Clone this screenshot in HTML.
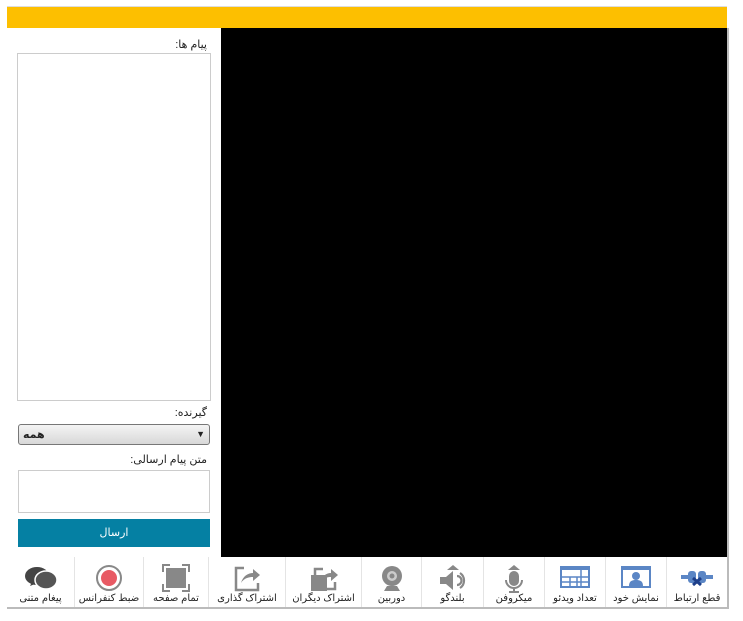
<!DOCTYPE html>
<html><head><meta charset="utf-8"><style>
*{box-sizing:border-box;margin:0;padding:0}
body{width:743px;height:621px;background:#fff;position:relative;font-family:"Liberation Sans","DejaVu Sans",sans-serif;font-size:11px;color:#222;overflow:hidden}
.abs{position:absolute}
.lbl{direction:rtl;text-align:right}
.tb{position:absolute;top:557px;height:50px;border-right:1px solid #e4e4e4;text-align:center;font-size:10px;color:#222}
.tb svg{position:absolute;left:50%;top:7px;transform:translateX(-50%)}
.tb span{position:absolute;left:0;right:0;top:36px;direction:rtl;white-space:nowrap}
</style></head><body>
<div class="abs" style="left:7px;top:6px;width:720px;height:1px;background:#ddd"></div>
<div class="abs" style="left:7px;top:7px;width:720px;height:21px;background:#fdbf00"></div>
<div class="abs" style="left:221px;top:28px;width:506px;height:529px;background:#000"></div>
<div class="abs lbl" style="left:20px;top:38px;width:187px">پیام ها:</div>
<div class="abs" style="left:17px;top:53px;width:194px;height:348px;border:1px solid #ccc"></div>
<div class="abs lbl" style="left:20px;top:406px;width:187px">گیرنده:</div>
<div class="abs" style="left:18px;top:424px;width:192px;height:21px;border:1px solid #777;border-radius:3px;background:linear-gradient(#f4f4f4,#d8d8d8)"><span style="position:absolute;left:4px;top:3px;font-size:11px;font-weight:bold">همه</span><span style="position:absolute;right:4px;top:4px;font-size:9px">▼</span></div>
<div class="abs lbl" style="left:20px;top:453px;width:187px">متن پیام ارسالی:</div>
<div class="abs" style="left:18px;top:470px;width:192px;height:43px;border:1px solid #ccc"></div>
<div class="abs" style="left:18px;top:519px;width:192px;height:28px;background:#0580a3;color:#fff;text-align:center;line-height:28px;font-size:11px">ارسال</div>
<div class="abs" style="left:7px;top:607px;width:721px;height:2px;background:#bbb"></div>
<div class="abs" style="left:727px;top:28px;width:2px;height:581px;background:#bbb"></div>

<div class="tb" style="left:7px;width:68px"><svg width="34" height="28"><ellipse cx="13" cy="12" rx="12" ry="9" fill="#444"/><path d="M6 22l2-4 3 2z" fill="#444"/><ellipse cx="22" cy="16" rx="11" ry="9" fill="#555" stroke="#fff" stroke-width="1.5"/></svg><span>پیغام متنی</span></div>
<div class="tb" style="left:75px;width:69px"><svg width="28" height="28"><circle cx="14" cy="14" r="12" fill="none" stroke="#888" stroke-width="2"/><circle cx="14" cy="14" r="8" fill="#e85a64"/></svg><span>ضبط کنفرانس</span></div>
<div class="tb" style="left:144px;width:65px"><svg width="28" height="28"><rect x="4" y="4" width="20" height="20" fill="#888"/><path d="M1 8V1h7M20 1h7v7M27 20v7h-7M8 27H1v-7" fill="none" stroke="#888" stroke-width="2"/></svg><span>تمام صفحه</span></div>
<div class="tb" style="left:209px;width:77px"><svg width="28" height="28"><path d="M11 4H3v22h22v-7" fill="none" stroke="#888" stroke-width="2.5"/><path d="M8 19c2-7 7-10 12-10V5l7 6-7 6v-4c-4 0-9 1-12 6z" fill="#888"/></svg><span>اشتراک گذاری</span></div>
<div class="tb" style="left:286px;width:76px"><svg width="28" height="28"><rect x="1" y="11" width="16" height="16" fill="#888"/><path d="M13 5H5v20h20v-7" fill="none" stroke="#888" stroke-width="2.5"/><path d="M10 19c2-7 6-10 11-10V5l7 6-7 6v-4c-4 0-8 1-11 6z" fill="#888"/></svg><span>اشتراک دیگران</span></div>
<div class="tb" style="left:362px;width:60px"><svg width="28" height="28"><circle cx="14" cy="12" r="10" fill="#888"/><circle cx="14" cy="12" r="5" fill="#ccc"/><circle cx="14" cy="12" r="2.5" fill="#888"/><path d="M6 27h16l-3-5H9z" fill="#888"/></svg><span>دوربین</span></div>
<div class="tb" style="left:422px;width:62px"><svg width="32" height="30"><path d="M10 6l6-5 6 5z" fill="#888"/><path d="M3 13h6l7-6v19l-7-6H3z" fill="#888"/><path d="M20 12a4.5 4.5 0 010 9M23 9a9 9 0 010 15" fill="none" stroke="#888" stroke-width="2.2"/></svg><span>بلندگو</span></div>
<div class="tb" style="left:484px;width:61px"><svg width="28" height="30"><path d="M8 6l6-5 6 5z" fill="#888"/><rect x="9" y="7" width="10" height="15" rx="5" fill="#888"/><path d="M6 16a8 8 0 0016 0M14 24v4M9 28h10" fill="none" stroke="#888" stroke-width="2"/></svg><span>میکروفن</span></div>
<div class="tb" style="left:545px;width:61px"><svg width="32" height="26"><rect x="1" y="2" width="30" height="22" fill="#5b86c5"/><rect x="3" y="6" width="26" height="16" fill="#fff"/><path d="M3 13h26M3 18h26M11 13v9M18 13v9M22 6v16" stroke="#5b86c5" stroke-width="1.5"/></svg><span>تعداد ویدئو</span></div>
<div class="tb" style="left:606px;width:61px"><svg width="32" height="26"><rect x="1" y="2" width="30" height="22" fill="#5b86c5"/><rect x="3" y="6" width="26" height="16" fill="#fff"/><circle cx="16" cy="12" r="4" fill="#5b86c5"/><path d="M9 22c0-5 3-6 7-6s7 1 7 6z" fill="#5b86c5"/></svg><span>نمایش خود</span></div>
<div class="tb" style="left:667px;width:60px;border-right:none"><svg width="34" height="26"><path d="M1 13h8M25 13h8" stroke="#5b86c5" stroke-width="4"/><rect x="8" y="7" width="8" height="12" rx="3" fill="#5b86c5"/><rect x="18" y="7" width="8" height="12" rx="3" fill="#5b86c5"/><path d="M13 14l8 7M21 14l-8 7" stroke="#1d3f8a" stroke-width="3"/></svg><span>قطع ارتباط</span></div>
</body></html>
